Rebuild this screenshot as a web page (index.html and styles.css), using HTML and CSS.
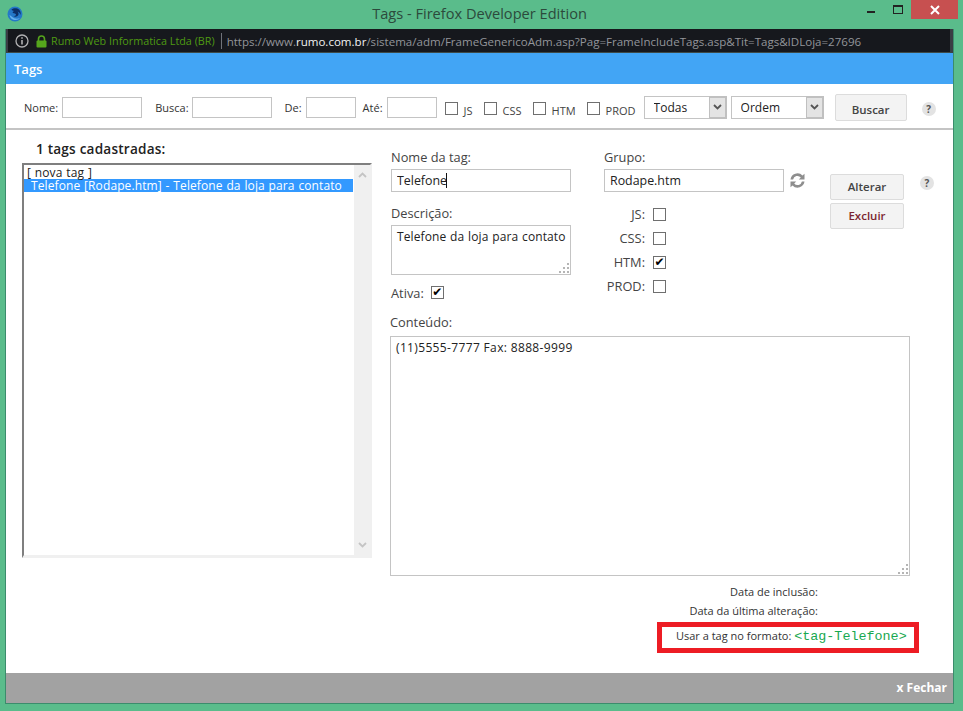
FILE: index.html
```html
<!DOCTYPE html>
<html lang="en">
<head>
  <meta charset="UTF-8" />
  <title>Tags - Firefox Developer Edition</title>
  <link rel="stylesheet" href="styles.css">
</head>
<body>
  <div class="titlebar">
    <svg class="app-icon" width="16" height="16" viewBox="0 0 16 16">
      <circle cx="8" cy="8" r="7.500" fill="#2478c8"/>
      <path d="M4.500 3.500C6.500 1.800 10 1.800 12 3.500c1.500 1.500 2 3.500 1.500 5.500-.5-2-1.500-3-3-3.500 1 1 1.500 2.500.5 4-1 1.300-3 1.500-4.500.5 1.500 0 2.500-.5 2.500-1.500s-2-1-3-1.500C5 6.500 6 5.500 7 5 6 4.800 5 4.500 4.500 3.500z" fill="#0c2f66"/>
      <path d="M2.500 9c.5 3 3 5 6 5 2 0 3.500-.8 4.500-2-2 1-5 1-7-.5-1.500-1-2.500-2-3.500-2.500z" fill="#67b2ee"/>
    </svg>
    <div class="title">Tags - Firefox Developer Edition</div>
    <div class="win-buttons">
      <span class="win-min"></span>
      <span class="win-max"></span>
      <span class="win-close">
        <svg width="10" height="10" viewBox="0 0 10 10"><path d="M1 1l8 8M9 1l-8 8" stroke="#fff" stroke-width="2"/></svg>
      </span>
    </div>
  </div>

  <div class="window">
    <div class="urlbar">
      <svg class="url-info" width="14" height="14" viewBox="0 0 14 14">
        <circle cx="7" cy="7" r="6" fill="none" stroke="#b1b1b3" stroke-width="1.300"/>
        <path d="M7 6v4.500M7 3.300v1.500" stroke="#b1b1b3" stroke-width="1.600"/>
      </svg>
      <svg class="url-lock" width="11" height="13" viewBox="0 0 11 13">
        <path d="M2.500 6V4a3 3 0 0 1 6 0v2" fill="none" stroke="#55a51c" stroke-width="1.600"/>
        <rect x="0.500" y="5.500" width="10" height="7" rx="1" fill="#55a51c"/>
      </svg>
      <span class="url-org">Rumo Web Informatica Ltda (BR)</span>
      <span class="url-text">https://www.<b>rumo.com.br</b>/sistema/adm/FrameGenericoAdm.asp?Pag=FrameIncludeTags.asp&amp;Tit=Tags&amp;IDLoja=27696</span>
    </div>

    <div class="page-head">Tags</div>

    <form class="filters">
      <label class="f-label f-nome">Nome:</label><input class="txt w80" type="text">
      <label class="f-label f-busca">Busca:</label><input class="txt w80" type="text">
      <label class="f-label f-de">De:</label><input class="txt w50" type="text">
      <label class="f-label f-ate">Até:</label><input class="txt w50" type="text">
      <input class="chk f-chk f-chk-first" type="checkbox"><span class="chk-label">JS</span>
      <input class="chk f-chk" type="checkbox"><span class="chk-label">CSS</span>
      <input class="chk f-chk" type="checkbox"><span class="chk-label">HTM</span>
      <input class="chk f-chk" type="checkbox"><span class="chk-label">PROD</span>
      <span class="sel-wrap sel-todas">
        <select class="sel"><option>Todas</option></select>
        <span class="sel-arrow"><svg width="9" height="6" viewBox="0 0 9 6"><path d="M1 1l3.500 3.500L8 1" fill="none" stroke="#555" stroke-width="1.800"/></svg></span>
      </span>
      <span class="sel-wrap sel-ordem">
        <select class="sel"><option>Ordem</option></select>
        <span class="sel-arrow"><svg width="9" height="6" viewBox="0 0 9 6"><path d="M1 1l3.500 3.500L8 1" fill="none" stroke="#555" stroke-width="1.800"/></svg></span>
      </span>
      <button class="btn btn-buscar" type="button"><span class="btn-low">Buscar</span></button>
      <span class="help help-top">?</span>
    </form>

    <div class="main">
      <div class="list-col">
        <div class="list-title">1 tags cadastradas:</div>
        <div class="listbox">
          <div class="list-rows">
            <div class="list-row">[ nova tag ]</div>
            <div class="list-row selected">Telefone [Rodape.htm] - Telefone da loja para contato</div>
          </div>
          <div class="list-scroll">
            <svg width="9" height="6" viewBox="0 0 9 6"><path d="M1 5l3.500-3.500L8 5" fill="none" stroke="#c4c4c4" stroke-width="1.800"/></svg>
            <svg width="9" height="6" viewBox="0 0 9 6"><path d="M1 1l3.500 3.500L8 1" fill="none" stroke="#c4c4c4" stroke-width="1.800"/></svg>
          </div>
        </div>
      </div>

      <div class="form-col">
        <div class="form-top">
          <div class="field-col">
            <label class="lbl">Nome da tag:</label>
            <div class="caret-wrap">
              <input class="txt field" type="text" value="Telefone">
              <span class="caret"></span>
            </div>
            <label class="lbl lbl-desc">Descrição:</label>
            <div class="area area-desc">Telefone da loja para contato
              <svg class="grip" width="10" height="10" viewBox="0 0 10 10"><path d="M8 0h2v2H8zM4 4h2v2H4zM8 4h2v2H8zM0 8h2v2H0zM4 8h2v2H4zM8 8h2v2H8z" fill="#b5b5b5"/></svg>
            </div>
            <div class="ativa"><span class="lbl">Ativa:</span><input class="chk" type="checkbox" checked></div>
          </div>
          <div class="group-col">
            <label class="lbl">Grupo:</label>
            <div class="group-row">
              <input class="txt field" type="text" value="Rodape.htm">
              <svg class="refresh" width="17" height="17" viewBox="0 0 17 17">
                <path d="M1.500 7.500A7 7 0 0 1 13.500 3.600L15.500 1.700V7.500H9.800l2-2A4.400 4.400 0 0 0 4.100 7.500z" fill="#8e8e8e"/>
                <path d="M15.500 9.500A7 7 0 0 1 3.500 13.400L1.500 15.300V9.500H7.200l-2 2A4.400 4.400 0 0 0 12.900 9.500z" fill="#8e8e8e"/>
              </svg>
            </div>
            <div class="flags">
              <span class="lbl">JS:</span><input class="chk" type="checkbox">
              <span class="lbl">CSS:</span><input class="chk" type="checkbox">
              <span class="lbl">HTM:</span><input class="chk" type="checkbox" checked>
              <span class="lbl">PROD:</span><input class="chk" type="checkbox">
            </div>
          </div>
          <div class="actions">
            <button class="btn" type="button">Alterar</button>
            <button class="btn btn-del" type="button">Excluir</button>
          </div>
          <span class="help help-form">?</span>
        </div>

        <label class="lbl lbl-cont">Conteúdo:</label>
        <div class="area area-cont">(11)5555-7777 Fax: 8888-9999
          <svg class="grip" width="10" height="10" viewBox="0 0 10 10"><path d="M8 0h2v2H8zM4 4h2v2H4zM8 4h2v2H8zM0 8h2v2H0zM4 8h2v2H4zM8 8h2v2H8z" fill="#b5b5b5"/></svg>
        </div>

        <div class="meta">
          <div class="meta-row">Data de inclusão:</div>
          <div class="meta-row">Data da última alteração:</div>
        </div>
        <div class="tag-box">Usar a tag no formato: <code>&lt;tag-Telefone&gt;</code></div>
      </div>
    </div>

    <div class="footer"><a href="#" class="close-link">x Fechar</a></div>
  </div>
</body>
</html>
```

FILE: styles.css
```css
html, body { margin: 0; padding: 0; }
body {
  width: 963px;
  height: 711px;
  overflow: hidden;
  background: #5abc8b;
  font-family: "Open Sans", sans-serif;
  font-size: 12px;
  color: #333;
}

/* window chrome */
.titlebar { height: 29px; display: flex; position: relative; }
.app-icon { margin: 6px 0 0 7px; }
.title { position: absolute; left: 0; right: 4px; top: 3px; text-align: center; font-size: 14.600px; line-height: 20px; color: #2c4a3c; }
.win-buttons { margin-left: auto; display: flex; margin-right: 5px; }
.win-min { width: 8px; height: 2px; background: #222; margin: 11px 18px 0 0; }
.win-max { width: 8px; height: 6px; border: 1px solid #222; border-top-width: 2px; margin: 5px 8px 0 0; }
.win-close { width: 47px; height: 19px; background: #c75050; display: flex; align-items: center; justify-content: center; }

.window { margin: 0 9px 0 5px; height: 674px; border: 1px solid #3b8c6c; border-top: 0; background: #fff; display: flex; flex-direction: column; }

.urlbar { height: 24px; padding-top: 1px; background: #16181d; border-bottom: 1px solid #3d4a48; box-sizing: border-box; display: flex; align-items: center; font-size: 11.550px; color: #93959a; border-left: 2px solid #3a3d44; border-right: 3px solid #3a3d44; }
.url-info { margin-left: 7px; }
.url-lock { margin-left: 7px; }
.url-org { color: #4e9a12; font-size: 10.800px; margin-left: 4px; padding-right: 6px; border-right: 1px solid #70737a; line-height: 16px; }
.url-text { margin-left: 5px; white-space: nowrap; }
.url-text b { color: #f2f2f2; font-weight: 400; }

.page-head { height: 31px; background: #42a5f5; color: #fff; font-size: 13px; font-weight: 600; line-height: 32px; padding-left: 8px; }

/* filter bar */
.filters { height: 46px; box-sizing: border-box; border-bottom: 2px solid #c4c4c4; display: flex; align-items: center; padding: 2px 0 0 18px; font-size: 11px; }
.f-label { color: #333; margin-right: 4px; }
.f-busca { margin-left: 13px; margin-right: 3px; }
.f-de { margin-left: 13px; }
.f-ate { margin-left: 7px; }
.txt { box-sizing: border-box; height: 21px; border: 1px solid #c4c4c4; padding: 0 5px; font: 12.400px "Open Sans", sans-serif; color: #222; background: #fff; }
.w80 { width: 80px; }
.w50 { width: 50px; }
.chk { appearance: none; -webkit-appearance: none; width: 13px; height: 13px; margin: 0; box-sizing: border-box; border: 1px solid #6f6f6f; background: #fff; display: grid; place-items: center; overflow: hidden; }
.chk:checked::before { content: "\2714"; font: 12px/11px "DejaVu Sans", sans-serif; color: #000; }
.f-chk { margin: 2px 6px 0 11px; }
.f-chk-first { margin-left: 8px; }
.chk-label { margin-top: 6px; color: #444; font-size: 11px; }
.sel-wrap { position: relative; display: block; height: 23px; }
.sel-todas { margin-left: 8px; }
.sel-ordem { margin-left: 4px; }
.sel { appearance: none; -webkit-appearance: none; box-sizing: border-box; height: 23px; border: 1px solid #c4c4c4; background: #fff; font: 12px "Open Sans", sans-serif; color: #222; padding: 0 9px; display: block; }
.sel-todas .sel { width: 83px; }
.sel-ordem .sel { width: 93px; }
.sel-arrow { position: absolute; right: 0; top: 0; width: 18px; height: 23px; background: #e4e4e4; border: 2px solid #c0c0c0; border-left-width: 1px; box-sizing: border-box; display: grid; place-items: center; }
.btn { box-sizing: border-box; width: 74px; height: 26px; border: 1px solid #dcdcdc; border-radius: 2px; background: #f3f3f3; font: 600 11.500px "Open Sans", sans-serif; color: #444; padding: 0 0 1px; }
.btn-buscar { width: 72px; height: 27px; margin-left: 11px; }
.btn-low { position: relative; top: 3px; }
.help { width: 14px; height: 14px; border-radius: 50%; background: #e3e3e3; color: #555; font: 700 10px/14px "Open Sans", sans-serif; text-align: center; display: block; flex: none; }
.help-top { margin: 4px 0 0 15px; }

/* main area */
.main { flex: 1; display: flex; padding: 0 0 0 16px; }
.list-col { width: 350px; flex: none; }
.list-title { font-size: 13.600px; font-weight: 600; color: #222; margin: 10px 0 0 14px; line-height: 18px; letter-spacing: 0.200px; }
.listbox { box-sizing: border-box; height: 395px; margin-top: 5px; border-top: 2px solid #7f7f7f; border-left: 2px solid #7f7f7f; border-right: 2px solid #f0f0f0; border-bottom: 3px solid #f0f0f0; display: flex; }
.list-rows { flex: 1; font-size: 12px; letter-spacing: 0.100px; word-spacing: 0.600px; line-height: 13px; color: #222; padding-top: 1px; white-space: nowrap; }
.list-row { padding-left: 3px; height: 13px; }
.list-row.selected { background: #3399ff; color: #fff; padding-left: 7px; margin-right: 1px; }
.list-scroll { width: 16px; background: #f0f0f0; display: flex; flex-direction: column; justify-content: space-between; align-items: center; padding: 7px 0; box-sizing: border-box; }

.form-col { position: relative; margin-left: 18px; width: 530px; flex: none; }
.form-top { display: flex; height: 184px; }
.lbl { font-size: 12.800px; color: #444; line-height: 17px; display: block; }
.field { width: 180px; display: block; height: 23px; }
.field-col { width: 181px; padding: 19px 0 0 1px; flex: none; }
.field-col > .lbl:first-child { margin-bottom: 3px; }
.caret-wrap { position: relative; width: 180px; }
.caret { position: absolute; left: 55px; top: 4px; width: 1px; height: 15px; background: #111; }
.lbl-desc { margin-top: 13px; margin-bottom: 3px; }
.area { box-sizing: border-box; border: 1px solid #c4c4c4; font-size: 12px; letter-spacing: 0.100px; word-spacing: 0.600px; color: #222; padding: 2px 5px; position: relative; white-space: nowrap; }
.area-desc { width: 180px; height: 50px; }
.grip { position: absolute; right: 1px; bottom: 1px; }
.ativa { display: flex; align-items: center; gap: 7px; margin-top: 10px; }
.ativa .chk { margin-bottom: 3px; }
.group-col { margin-left: 32px; width: 226px; padding-top: 19px; flex: none; }
.group-col > .lbl { margin-bottom: 3px; }
.group-row { display: flex; align-items: center; gap: 5px; }
.refresh { display: block; flex: none; }
.flags { display: grid; grid-template-columns: 41px 13px; gap: 11px 8px; justify-content: start; margin-top: 16px; align-items: center; }
.flags .lbl { text-align: right; height: 13px; line-height: 13px; }
.actions { width: 74px; padding-top: 44px; display: flex; flex-direction: column; gap: 3px; flex: none; }
.btn-del { color: #7c2630; }
.help-form { margin: 46px 0 0 16px; }

.lbl-cont { margin-bottom: 5px; }
.area-cont { width: 520px; height: 240px; padding: 2px 5px; letter-spacing: 0.350px; word-spacing: 0; }

.meta { margin-top: 6px; font-size: 11px; color: #333; width: 428px; text-align: right; }
.meta-row { line-height: 19px; }
.tag-box { box-sizing: border-box; position: absolute; left: 267px; top: 492px; width: 262px; height: 31px; border: 5px solid #ed1c24; font-size: 11px; color: #333; line-height: 18px; padding-left: 14px; white-space: nowrap; }
.tag-box code { font: 400 13.400px "Liberation Mono", monospace; color: #18a850; }

.footer { height: 30px; background: #a2a2a2; text-align: right; line-height: 30px; padding-right: 6px; }
.close-link { color: #fff; font-weight: 700; font-size: 12px; text-decoration: none; }
```
